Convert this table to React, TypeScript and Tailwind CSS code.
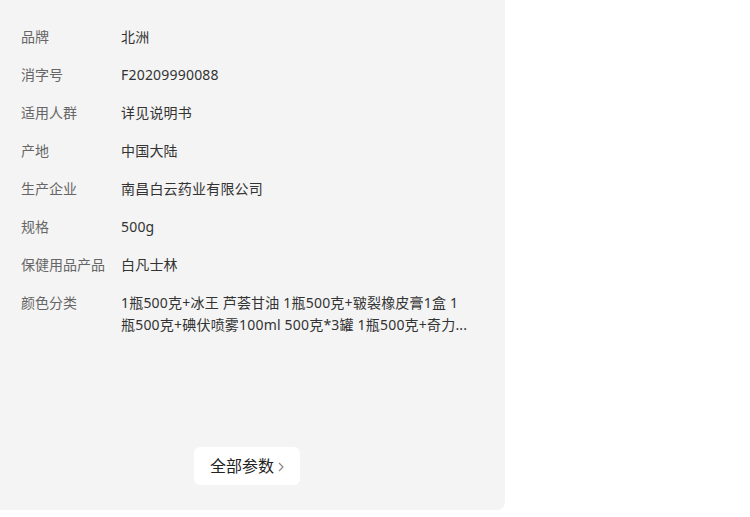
import React from "react";

const rows: [string, React.ReactNode][] = [
  ["品牌", "北洲"],
  ["消字号", "F20209990088"],
  ["适用人群", "详见说明书"],
  ["产地", "中国大陆"],
  ["生产企业", "南昌白云药业有限公司"],
  ["规格", "500g"],
  ["保健用品产品", "白凡士林"],
  [
    "颜色分类",
    <>
      <span className="block whitespace-nowrap">1瓶500克+冰王 芦荟甘油 1瓶500克+皲裂橡皮膏1盒 1</span>
      <span className="block whitespace-nowrap">瓶500克+碘伏喷雾100ml 500克*3罐 1瓶500克+奇力...</span>
    </>,
  ],
];

export default function App() {
  return (
    <div
      className="w-[750px] h-[517px] bg-white"
      style={{ fontFamily: '"Noto Sans", "Noto Sans CJK SC", sans-serif' }}
    >
      <div className="w-[505px] h-[510px] bg-[#f4f4f4] rounded-br-[8px] flex flex-col">
        <div className="pt-[26px] pl-[21px] flex flex-col gap-4">
          {rows.map(([k, v]) => (
            <div key={k} className="flex text-[14px] leading-[22px]">
              <div className="w-[100px] shrink-0 text-[#666]">{k}</div>
              <div className="w-[370px] text-[#333] tracking-[0.2px]">{v}</div>
            </div>
          ))}
        </div>
        <div className="mt-auto mb-[25px] pl-[194px] flex">
          <div className="w-[106px] h-[38px] bg-white rounded-[6px] flex items-center justify-center gap-[4px] text-[16px] text-[#222]">
            <span>全部参数</span>
            <svg width="6" height="10" viewBox="0 0 6 10" fill="none" className="mt-[1px]">
              <path d="M1 1l4 4-4 4" stroke="#888" strokeWidth="1.2" />
            </svg>
          </div>
        </div>
      </div>
    </div>
  );
}
